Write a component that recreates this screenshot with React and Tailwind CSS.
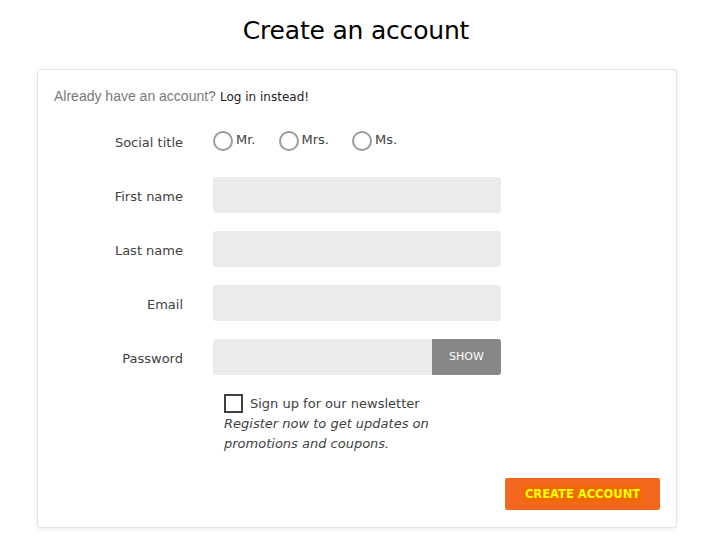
import { useState } from 'react'

const FONT = { fontFamily: '"DejaVu Sans", "Open Sans", sans-serif' }

const FIELDS = [
  { label: 'First name', type: 'text' },
  { label: 'Last name', type: 'text' },
  { label: 'Email', type: 'email' },
]

function Radio({ label }) {
  return (
    <label className="flex items-center gap-[3px] cursor-pointer">
      <span className="w-[20px] h-[20px] rounded-full border-2 border-[#9a9a9a] bg-white" />
      <span className="text-[13px] text-[#414141] -mt-[3px]">{label}</span>
    </label>
  )
}

export default function App() {
  const [newsletter, setNewsletter] = useState(false)

  return (
    <div className="bg-white min-h-[544px] text-[#414141]" style={FONT}>
      <h1 className="text-center text-[25px] leading-[30px] text-black pt-[16px] h-[69px] tracking-[-0.2px] pl-[4px]">
        Create an account
      </h1>

      <section className="ml-[37px] w-[640px] h-[459px] border border-[#e3e3e3] rounded-[3px] bg-white shadow-[0_2px_4px_rgba(0,0,0,0.06)] px-[16px] pt-[17px]">
        <p className="h-[18px] text-[13px] leading-[18px]">
          <span className="text-[#7a7a7a]" style={{ fontFamily: '"Liberation Sans", sans-serif', fontSize: '14px' }}>
            Already have an account?
          </span>{' '}
          <a href="#" className="text-[#232323] text-[12px]">Log in instead!</a>
        </p>

        <div className="mt-[18px] flex flex-col gap-[18px]">
          <div className="flex items-center h-[36px]">
            <span className="w-[129px] text-right text-[13px] pt-[3px]">Social title</span>
            <div className="ml-[30px] flex items-center gap-[23px]">
              <Radio label="Mr." />
              <Radio label="Mrs." />
              <Radio label="Ms." />
            </div>
          </div>

          {FIELDS.map((f) => (
            <div key={f.label} className="flex items-center h-[36px]">
              <span className="w-[129px] text-right text-[13px] pt-[3px]">{f.label}</span>
              <input type={f.type} className="ml-[30px] w-[288px] h-[36px] rounded-[3px] bg-[#ebebeb] outline-none px-3" />
            </div>
          ))}

          <div className="flex items-center h-[36px]">
            <span className="w-[129px] text-right text-[13px] pt-[3px]">Password</span>
            <div className="ml-[30px] flex w-[288px] h-[36px]">
              <input type="password" className="flex-1 min-w-0 h-full rounded-l-[3px] bg-[#ebebeb] outline-none px-3" />
              <button className="w-[69px] shrink-0 h-full bg-[#878787] text-white text-[11px] rounded-r-[3px]">SHOW</button>
            </div>
          </div>
        </div>

        <div className="ml-[170px] mt-[19px]">
          <label className="flex items-center gap-[7px] cursor-pointer" onClick={() => setNewsletter(!newsletter)}>
            <span className="w-[19px] h-[19px] border-2 border-[#414141] bg-white flex items-center justify-center text-[12px]">
              {newsletter ? '✓' : ''}
            </span>
            <span className="text-[13px] text-[#414141]">Sign up for our newsletter</span>
          </label>
          <p className="italic text-[13px] leading-[20px] text-[#414141] w-[230px]">
            Register now to get updates on promotions and coupons.
          </p>
        </div>

        <div className="flex justify-end mt-[24px]">
          <button className="w-[155px] h-[32px] bg-[#f5661f] rounded-[2px] flex items-center justify-center">
            <span className="bg-[#f06a00] text-[#ffff00] font-bold text-[11.5px] px-[2px] leading-[16px]">CREATE ACCOUNT</span>
          </button>
        </div>
      </section>
    </div>
  )
}
